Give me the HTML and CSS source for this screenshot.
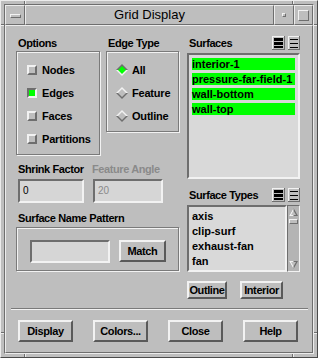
FILE: index.html
```html
<!DOCTYPE html>
<html>
<head>
<meta charset="utf-8">
<title>Grid Display</title>
<link rel="stylesheet" href="styles.css">
</head>
<body>
<div class="window">
  <span class="tick tv tl"></span><span class="tick th lt"></span>
  <span class="tick tv tr"></span><span class="tick th rt"></span>
  <span class="tick tv bl"></span><span class="tick th lb"></span>
  <span class="tick tv br"></span><span class="tick th rb"></span>
  <div class="frame">
    <div class="titlebar">
      <div class="tb-btn tb-menu"><span class="menu-bar"></span></div>
      <div class="tb-title">Grid Display</div>
      <div class="tb-btn tb-min"><span class="min-sq"></span></div>
      <div class="tb-btn tb-max"><span class="max-sq"></span></div>
    </div>
    <div class="content">
      <div class="main">
        <div class="left">
          <div class="row1">
            <div class="group options">
              <div class="label">Options</div>
              <div class="etched opt-box">
                <div class="opt"><span class="check"></span>Nodes</div>
                <div class="opt"><span class="check on"></span>Edges</div>
                <div class="opt"><span class="check"></span>Faces</div>
                <div class="opt"><span class="check"></span>Partitions</div>
              </div>
            </div>
            <div class="group edge">
              <div class="label">Edge Type</div>
              <div class="etched edge-box">
                <div class="opt radio-opt"><svg class="radio" viewBox="0 0 12 12" width="12" height="12"><polygon points="0,6 6,0 12,6" fill="#6e6e6e"/><polygon points="0,6 6,12 12,6" fill="#f2f2f2"/><polygon points="2,6 6,2 10,6 6,10" fill="#00ff00"/></svg>All</div>
                <div class="opt radio-opt"><svg class="radio" viewBox="0 0 12 12" width="12" height="12"><polygon points="0,6 6,0 12,6" fill="#f2f2f2"/><polygon points="0,6 6,12 12,6" fill="#6e6e6e"/><polygon points="2,6 6,2 10,6 6,10" fill="#bebebe"/></svg>Feature</div>
                <div class="opt radio-opt"><svg class="radio" viewBox="0 0 12 12" width="12" height="12"><polygon points="0,6 6,0 12,6" fill="#f2f2f2"/><polygon points="0,6 6,12 12,6" fill="#6e6e6e"/><polygon points="2,6 6,2 10,6 6,10" fill="#bebebe"/></svg>Outline</div>
              </div>
            </div>
          </div>
          <div class="row2">
            <div class="field shrink">
              <div class="label">Shrink Factor</div>
              <div class="input num">0</div>
            </div>
            <div class="field angle">
              <div class="label disabled">Feature Angle</div>
              <div class="input num dim">20</div>
            </div>
          </div>
          <div class="label pattern-label">Surface Name Pattern</div>
          <div class="etched pattern-box">
            <div class="input pattern-input"></div>
            <div class="btn match">Match</div>
          </div>
        </div>
        <div class="right">
          <div class="list-head">
            <div class="label">Surfaces</div>
            <div class="icons">
              <svg class="ico" width="13" height="14" viewBox="0 0 13 14"><rect width="13" height="14" fill="#6e6e6e"/><rect width="12" height="13" fill="#f2f2f2"/><rect x="1" y="1" width="11" height="12" fill="#bebebe"/><rect x="2" y="2" width="9" height="3" fill="#000"/><rect x="2" y="6" width="9" height="3" fill="#000"/><rect x="2" y="10" width="9" height="2" fill="#000"/></svg>
              <svg class="ico" width="12" height="14" viewBox="0 0 12 14"><rect width="12" height="14" fill="#6e6e6e"/><rect width="11" height="13" fill="#f2f2f2"/><rect x="1" y="1" width="10" height="12" fill="#bebebe"/><rect x="2" y="3" width="8" height="1" fill="#000"/><rect x="2" y="7" width="8" height="1" fill="#000"/><rect x="2" y="11" width="8" height="1" fill="#000"/></svg>
            </div>
          </div>
          <div class="list surfaces">
            <div class="item sel">interior-1</div>
            <div class="item sel">pressure-far-field-1</div>
            <div class="item sel">wall-bottom</div>
            <div class="item sel">wall-top</div>
          </div>
          <div class="list-head types-head">
            <div class="label">Surface Types</div>
            <div class="icons">
              <svg class="ico" width="13" height="14" viewBox="0 0 13 14"><rect width="13" height="14" fill="#6e6e6e"/><rect width="12" height="13" fill="#f2f2f2"/><rect x="1" y="1" width="11" height="12" fill="#bebebe"/><rect x="2" y="2" width="9" height="3" fill="#000"/><rect x="2" y="6" width="9" height="3" fill="#000"/><rect x="2" y="10" width="9" height="2" fill="#000"/></svg>
              <svg class="ico" width="12" height="14" viewBox="0 0 12 14"><rect width="12" height="14" fill="#6e6e6e"/><rect width="11" height="13" fill="#f2f2f2"/><rect x="1" y="1" width="10" height="12" fill="#bebebe"/><rect x="2" y="3" width="8" height="1" fill="#000"/><rect x="2" y="7" width="8" height="1" fill="#000"/><rect x="2" y="11" width="8" height="1" fill="#000"/></svg>
            </div>
          </div>
          <div class="types-row">
            <div class="list types">
              <div class="item">axis</div>
              <div class="item">clip-surf</div>
              <div class="item">exhaust-fan</div>
              <div class="item">fan</div>
            </div>
            <div class="scrollbar">
              <svg width="9" height="8" viewBox="0 0 9 8"><polygon points="0,8 4.5,0 9,8" fill="#6e6e6e"/><polygon points="0,8 4.5,0 4.5,8" fill="#f2f2f2"/><polygon points="2,7 4.5,2.5 7,7" fill="#bebebe"/></svg>
              <span class="thumb"></span>
              <span class="spacer"></span>
              <svg width="9" height="8" viewBox="0 0 9 8"><polygon points="0,0 4.5,8 9,0" fill="#6e6e6e"/><polygon points="0,0 4.5,8 4.5,0" fill="#f2f2f2"/><polygon points="2,1 4.5,5.5 7,1" fill="#bebebe"/></svg>
            </div>
          </div>
          <div class="type-btns">
            <div class="btn small outline">Outline</div>
            <div class="btn small interior">Interior</div>
          </div>
        </div>
      </div>
      <div class="separator"></div>
      <div class="actions">
        <div class="btn action">Display</div>
        <div class="btn action">Colors...</div>
        <div class="btn action">Close</div>
        <div class="btn action">Help</div>
      </div>
    </div>
  </div>
</div>
</body>
</html>
```

FILE: styles.css
```css
html, body {
  margin: 0;
  padding: 0;
  background: #bebebe;
}

body {
  font-family: "Liberation Sans", Arial, sans-serif;
  font-size: 11px;
  color: #000;
}

.window {
  position: relative;
  width: 318px;
  height: 358px;
  box-sizing: border-box;
  background: #bebebe;
  border: 1px solid;
  border-color: #ececec #4a4a4a #4a4a4a #ececec;
  padding: 3px;
}

.tick {
  position: absolute;
  background: #6e6e6e;
}
.tv { width: 1px; height: 3px; box-shadow: 1px 0 0 #ececec; }
.th { width: 3px; height: 1px; box-shadow: 0 1px 0 #ececec; }
.tl { left: 23px; top: 0; }
.tr { left: 291px; top: 0; }
.bl { left: 23px; bottom: 0; }
.br { left: 291px; bottom: 0; }
.lt { left: 0; top: 23px; }
.lb { left: 0; top: 331px; }
.rt { right: 0; top: 23px; }
.rb { right: 0; top: 331px; }

.frame {
  height: 100%;
  box-sizing: border-box;
  border: 1px solid;
  border-color: #6e6e6e #ececec #ececec #6e6e6e;
  display: flex;
  flex-direction: column;
}

.titlebar {
  display: flex;
  height: 20px;
}

.tb-btn, .tb-title {
  box-sizing: border-box;
  border: 1px solid;
  border-color: #ececec #6e6e6e #6e6e6e #ececec;
  display: flex;
  align-items: center;
  justify-content: center;
}

.tb-menu { width: 20px; }
.tb-title {
  flex: 1;
  font-size: 13px;
  line-height: 18px;
}
.tb-min { width: 20px; }
.tb-max { width: 19px; }

.menu-bar {
  width: 11px;
  height: 4px;
  box-sizing: border-box;
  border: 1px solid;
  border-color: #f2f2f2 #6e6e6e #6e6e6e #f2f2f2;
  margin-top: 2px;
}
.min-sq {
  width: 4px;
  height: 4px;
  box-sizing: border-box;
  border: 1px solid;
  border-color: #f2f2f2 #6e6e6e #6e6e6e #f2f2f2;
}
.max-sq {
  width: 11px;
  height: 11px;
  box-sizing: border-box;
  border: 1px solid;
  border-color: #f2f2f2 #6e6e6e #6e6e6e #f2f2f2;
}

.content {
  flex: 1;
  box-sizing: border-box;
  border: 1px solid;
  border-color: #ececec #6e6e6e #6e6e6e #ececec;
  padding-top: 10px;
}

.main {
  display: flex;
  gap: 8px;
  padding-left: 10px;
  font-weight: bold;
}

.label {
  font-weight: bold;
  font-size: 11px;
  line-height: 14px;
  height: 14px;
  padding-left: 2px;
  white-space: nowrap;
  letter-spacing: -0.4px;
}
.label.disabled {
  color: #8a8a8a;
  padding-left: 0;
}

.left {
  width: 163px;
  display: flex;
  flex-direction: column;
}

.row1 {
  display: flex;
  gap: 6px;
}
.options { width: 84px; }
.edge { width: 73px; }
.group .label { margin-bottom: 1px; }

.etched {
  box-sizing: border-box;
  border: 1px solid #7a7a7a;
  box-shadow: inset 1px 1px 0 #f2f2f2, 1px 1px 0 #f2f2f2;
}

.opt-box {
  height: 104px;
  padding: 6px 0 0 10px;
}
.edge-box {
  height: 81px;
  padding: 6px 0 0 9px;
}

.opt {
  display: flex;
  align-items: center;
  gap: 5px;
  height: 23px;
  font-weight: bold;
  white-space: nowrap;
  letter-spacing: -0.2px;
}
.radio-opt { gap: 4px; }

.check {
  width: 10px;
  height: 10px;
  box-sizing: border-box;
  border: 2px solid;
  border-color: #f2f2f2 #6e6e6e #6e6e6e #f2f2f2;
  background: #bebebe;
}
.check.on {
  border-color: #6e6e6e #f2f2f2 #f2f2f2 #6e6e6e;
  background: #00ff00;
}

.row2 {
  display: flex;
  margin-top: 7px;
}
.field .label { margin-bottom: 3px; }
.shrink {
  width: 76px;
  padding-left: 2px;
  box-sizing: border-box;
}
.shrink .label { padding-left: 0; }
.angle { width: 87px; }

.input {
  box-sizing: border-box;
  border: 2px solid;
  border-color: #6e6e6e #f2f2f2 #f2f2f2 #6e6e6e;
  background: #d6d6d6;
}
.num {
  height: 24px;
  padding-left: 3px;
  font-weight: normal;
  font-size: 10px;
  line-height: 20px;
}
.shrink .num { width: 66px; }
.angle .num { width: 70px; margin-left: 1px; }
.dim { color: #8a8a8a; }

.pattern-label {
  margin-top: 8px;
  margin-bottom: 2px;
}
.pattern-box {
  height: 44px;
  display: flex;
  align-items: flex-start;
  padding: 12px 0 0 13px;
}
.pattern-input {
  width: 80px;
  height: 23px;
}

.btn {
  box-sizing: border-box;
  border: 2px solid;
  border-color: #f2f2f2 #5a5a5a #5a5a5a #f2f2f2;
  background: #bebebe;
  font-weight: bold;
  font-size: 11px;
  letter-spacing: -0.4px;
  display: flex;
  align-items: center;
  justify-content: center;
  white-space: nowrap;
}
.match {
  width: 47px;
  height: 22px;
  margin-left: 9px;
}

.right {
  width: 113px;
  display: flex;
  flex-direction: column;
}

.list-head {
  display: flex;
  justify-content: space-between;
  align-items: flex-start;
  height: 14px;
}
.icons {
  display: flex;
  gap: 3px;
}
.ico { display: block; }

.list {
  box-sizing: border-box;
  border: 2px solid;
  border-color: #6e6e6e #f2f2f2 #f2f2f2 #6e6e6e;
  background: #d9d9d9;
  padding: 3px;
}
.surfaces {
  margin-top: 3px;
  height: 126px;
}
.item {
  height: 12px;
  line-height: 12px;
  margin-bottom: 3px;
  font-weight: bold;
  white-space: nowrap;
}
.item.sel { background: #00ff00; }

.types-head { margin-top: 9px; }
.types-row {
  display: flex;
  margin-top: 3px;
  height: 67px;
}
.types {
  width: 100px;
  height: 67px;
}
.scrollbar {
  width: 13px;
  height: 67px;
  box-sizing: border-box;
  border: 1px solid;
  border-color: #6e6e6e #f2f2f2 #f2f2f2 #6e6e6e;
  background: #b4b4b4;
  display: flex;
  flex-direction: column;
  align-items: center;
  padding: 2px 0;
}
.scrollbar svg { display: block; }
.thumb {
  width: 9px;
  height: 5px;
  margin-top: 3px;
  box-sizing: border-box;
  border: 1px solid;
  border-color: #f2f2f2 #6e6e6e #6e6e6e #f2f2f2;
  background: #bebebe;
}
.spacer { flex: 1; }

.type-btns {
  display: flex;
  gap: 13px;
  margin-top: 9px;
}
.small { height: 18px; }
.outline { width: 40px; }
.interior { width: 43px; }

.separator {
  margin: 9px 4px 0 5px;
  height: 1px;
  background: #7a7a7a;
  box-shadow: 0 1px 0 #f2f2f2;
}

.actions {
  display: flex;
  gap: 20px;
  margin-top: 11px;
  padding-left: 12px;
}
.action {
  width: 55px;
  height: 22px;
}
```
